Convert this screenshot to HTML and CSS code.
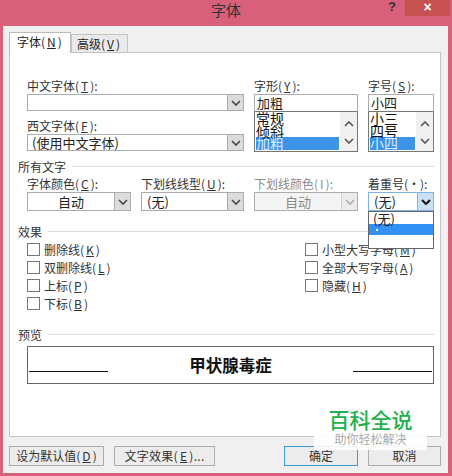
FILE: index.html
```html
<!DOCTYPE html>
<html lang="zh-CN">
<head>
    <meta charset="UTF-8">
    <title>字体</title>
    <link rel="stylesheet" href="styles.css">
</head>
<body>
    <div class="titlebar">
        <span class="title">字体</span>
        <span class="help">?</span>
        <span class="close">×</span>
    </div>

    <div class="dialog">
        <div class="tabs">
            <span class="tab active">字体(<u>N</u>)</span>
            <span class="tab">高级(<u>V</u>)</span>
        </div>

        <div class="panel">
            <!-- Font, style and size -->
            <div class="font-grid">
                <div class="col">
                    <label class="lbl">中文字体(<u>T</u>):</label>
                    <div class="combo short"><span class="val"></span><span class="arrow"><svg width="10" height="6" viewBox="0 0 10 6"><path d="M1 1l4 4 4-4" fill="none" stroke="#444" stroke-width="1.6"/></svg></span></div>
                    <label class="lbl second">西文字体(<u>F</u>):</label>
                    <div class="combo short"><span class="val">(使用中文字体)</span><span class="arrow"><svg width="10" height="6" viewBox="0 0 10 6"><path d="M1 1l4 4 4-4" fill="none" stroke="#444" stroke-width="1.6"/></svg></span></div>
                </div>
                <div class="col">
                    <label class="lbl">字形(<u>Y</u>):</label>
                    <div class="textbox">加粗</div>
                    <div class="listbox">
                        <div class="items">
                            <div class="item">常规</div>
                            <div class="item">倾斜</div>
                            <div class="item selected">加粗</div>
                        </div>
                        <div class="scroll">
                            <svg width="10" height="6" viewBox="0 0 10 6"><path d="M1 5l4-4 4 4" fill="none" stroke="#555" stroke-width="1.6"/></svg>
                            <svg width="10" height="6" viewBox="0 0 10 6"><path d="M1 1l4 4 4-4" fill="none" stroke="#555" stroke-width="1.6"/></svg>
                        </div>
                    </div>
                </div>
                <div class="col">
                    <label class="lbl">字号(<u>S</u>):</label>
                    <div class="textbox">小四</div>
                    <div class="listbox">
                        <div class="items">
                            <div class="item">小三</div>
                            <div class="item">四号</div>
                            <div class="item selected">小四</div>
                        </div>
                        <div class="scroll">
                            <svg width="10" height="6" viewBox="0 0 10 6"><path d="M1 5l4-4 4 4" fill="none" stroke="#555" stroke-width="1.6"/></svg>
                            <svg width="10" height="6" viewBox="0 0 10 6"><path d="M1 1l4 4 4-4" fill="none" stroke="#555" stroke-width="1.6"/></svg>
                        </div>
                    </div>
                </div>
            </div>

            <!-- All text -->
            <div class="section-head all-text"><span>所有文字</span><i></i></div>
            <div class="text-grid">
                <div>
                    <label class="lbl">字体颜色(<u>C</u>):</label>
                    <div class="combo tall center"><span class="val">自动</span><span class="arrow"><svg width="10" height="6" viewBox="0 0 10 6"><path d="M1 1l4 4 4-4" fill="none" stroke="#444" stroke-width="1.6"/></svg></span></div>
                </div>
                <div>
                    <label class="lbl">下划线线型(<u>U</u>):</label>
                    <div class="combo tall"><span class="val">(无)</span><span class="arrow"><svg width="10" height="6" viewBox="0 0 10 6"><path d="M1 1l4 4 4-4" fill="none" stroke="#444" stroke-width="1.6"/></svg></span></div>
                </div>
                <div class="disabled">
                    <label class="lbl">下划线颜色(<span class="plain">I</span>):</label>
                    <div class="combo tall center"><span class="val">自动</span><span class="arrow"><svg width="10" height="6" viewBox="0 0 10 6"><path d="M1 1l4 4 4-4" fill="none" stroke="#aaa" stroke-width="1.6"/></svg></span></div>
                </div>
                <div class="emphasis">
                    <label class="lbl">着重号(・):</label>
                    <div class="combo tall open"><span class="val">(无)</span><span class="arrow"><svg width="10" height="6" viewBox="0 0 10 6"><path d="M1 1l4 4 4-4" fill="none" stroke="#111" stroke-width="2"/></svg></span></div>
                    <div class="dropdown">
                        <div class="drop-item">(无)</div>
                        <div class="drop-item selected"><b class="dot"></b></div>
                    </div>
                </div>
            </div>

            <!-- Effects -->
            <div class="section-head effects"><span>效果</span><i></i></div>
            <div class="checks">
                <label class="check"><b></b>删除线(<u>K</u>)</label>
                <label class="check"><b></b>小型大写字母(<u>M</u>)</label>
                <label class="check"><b></b>双删除线(<u>L</u>)</label>
                <label class="check"><b></b>全部大写字母(<u>A</u>)</label>
                <label class="check"><b></b>上标(<u>P</u>)</label>
                <label class="check"><b></b>隐藏(<u>H</u>)</label>
                <label class="check"><b></b>下标(<u>B</u>)</label>
            </div>

            <!-- Preview -->
            <div class="section-head preview-head"><span>预览</span><i></i></div>
            <div class="preview">
                <i></i>
                <span>甲状腺毒症</span>
                <i></i>
            </div>
        </div>

        <div class="buttons">
            <button class="btn default-btn">设为默认值(<u>D</u>)</button>
            <button class="btn effect-btn">文字效果(<u>E</u>)...</button>
            <button class="btn ok-btn">确定</button>
            <button class="btn cancel-btn">取消</button>
        </div>
    </div>

    <!-- Watermark -->
    <div class="watermark">
        <div class="wm-name">百科全说</div>
        <div class="wm-sub">助你轻松解决</div>
    </div>
</body>
</html>
```

FILE: styles.css
```css
* {
    box-sizing: border-box;
}
html, body {
    height: 100%;
}
body {
    margin: 0;
    position: relative;
    overflow: hidden;
    background-color: #d9607a;
    font-family: "Noto Sans CJK SC", "Liberation Sans", sans-serif;
    font-size: 12px;
    color: #222;
}
u {
    text-decoration: underline;
    margin: 0 2px;
}
.plain {
    margin: 0 2px;
}

/* Title bar */
.titlebar {
    height: 26px;
    position: relative;
}
.title {
    position: absolute;
    left: 211px;
    top: 0;
    font-size: 15px;
    line-height: 20px;
    color: #333;
}
.help {
    position: absolute;
    left: 388px;
    top: -1px;
    font-family: "Liberation Sans", sans-serif;
    font-weight: bold;
    font-size: 13px;
    line-height: 16px;
    color: #333;
}
.close {
    position: absolute;
    left: 405px;
    top: 0;
    width: 45px;
    height: 16px;
    background-color: #c75050;
    color: #fff;
    text-align: center;
    font-family: "Liberation Sans", sans-serif;
    font-weight: bold;
    font-size: 14px;
    line-height: 15px;
}

/* Dialog */
.dialog {
    margin: 0 4px 0 3px;
    height: 447px;
    background-color: #f0f0f0;
    padding: 0 7px 0 6px;
}
.tabs {
    height: 26px;
    padding-top: 6px;
    display: flex;
    align-items: flex-end;
}
.tab {
    height: 18px;
    width: 57px;
    padding-left: 5px;
    border: 1px solid #c4c4c4;
    border-bottom: none;
    background-color: #eaeaea;
    font-size: 12px;
    line-height: 17px;
    white-space: nowrap;
}
.tab.active {
    height: 21px;
    width: 62px;
    padding-left: 7px;
    background-color: #fff;
    border-color: #bbb;
    position: relative;
    margin-bottom: -1px;
    z-index: 1;
}
.panel {
    height: 385px;
    background-color: #fff;
    border: 1px solid #c4c4c4;
    padding: 26px 6px 0 17px;
}

/* Labels and controls */
.lbl {
    display: block;
    height: 15px;
    font-size: 12px;
    line-height: 13px;
    white-space: nowrap;
    color: #333;
}
.lbl.second {
    margin-top: 8px;
}
.font-grid {
    display: grid;
    grid-template-columns: 217px 104px 66px;
    column-gap: 10px;
}
.combo {
    display: flex;
    border: 1px solid #acacac;
    background-color: #fff;
}
.combo.short {
    height: 17px;
}
.combo.tall {
    height: 19px;
}
.val {
    flex: 1;
    padding-left: 4px;
    font-size: 13px;
    line-height: 15px;
    white-space: nowrap;
}
.combo.tall .val {
    line-height: 17px;
    padding-left: 5px;
}
.combo.center .val {
    text-align: center;
    padding-left: 0;
}
.arrow {
    width: 16px;
    background-color: #dcdcdc;
    border-left: 1px solid #acacac;
    display: flex;
    align-items: center;
    justify-content: center;
}
.textbox {
    height: 18px;
    border: 1px solid #acacac;
    border-bottom-color: #777;
    padding-left: 2px;
    font-size: 13px;
    line-height: 16px;
}
.listbox {
    height: 40px;
    display: flex;
    border: 1px solid #777;
    border-top: none;
    overflow: hidden;
}
.items {
    flex: 1;
    padding: 0 1px;
    overflow: hidden;
}
.item {
    height: 12.5px;
    font-size: 14px;
    line-height: 13px;
    color: #111;
}
.item.selected {
    background-color: #3d93e8;
    color: #d8ecff;
}
.scroll {
    width: 17px;
    background-color: #f0f0f0;
    display: flex;
    flex-direction: column;
    align-items: center;
    justify-content: space-around;
    padding: 4px 0 2px;
}

/* Section headings with a rule */
.section-head {
    display: flex;
    align-items: center;
    height: 14px;
    margin-left: -9px;
    font-size: 12px;
    color: #333;
}
.section-head i {
    flex: 1;
    height: 1px;
    margin-left: 6px;
    background-color: #dcdcdc;
}
.all-text {
    margin-top: 7px;
}
.effects {
    margin-top: 13px;
}
.preview-head {
    margin-top: 15px;
}

/* All text row */
.text-grid {
    margin-top: 4px;
    display: grid;
    grid-template-columns: 104px 103px 104px 66px;
    column-gap: 10px;
}
.disabled .lbl,
.disabled .val {
    color: #8a8a8a;
}
.disabled .combo {
    background-color: #f4f4f4;
}
.disabled .arrow {
    background-color: #ececec;
    border-left-color: #d0d0d0;
}
.emphasis {
    position: relative;
}
.combo.open {
    border-color: #7eb4ea;
}
.combo.open .arrow {
    background-color: #c9e0f7;
    border-left-color: #7eb4ea;
}
.dropdown {
    position: absolute;
    left: 0;
    right: 0;
    top: 34px;
    height: 38px;
    background-color: #fff;
    border: 1px solid #666;
    z-index: 2;
}
.drop-item {
    height: 12px;
    padding-left: 4px;
    font-size: 13px;
    line-height: 13px;
}
.drop-item.selected {
    height: 11px;
    background-color: #3390f5;
    display: flex;
    align-items: center;
    padding-left: 7px;
}
.dot {
    width: 2px;
    height: 2px;
    background-color: #fff;
}

/* Effects checkboxes */
.checks {
    margin-top: 2px;
    display: grid;
    grid-template-columns: 278px 1fr;
    grid-auto-rows: 18px;
}
.check {
    display: flex;
    align-items: center;
    font-size: 12px;
    color: #333;
    white-space: nowrap;
}
.check b {
    width: 13px;
    height: 13px;
    margin-right: 4px;
    border: 1px solid #777;
    background-color: #fff;
}

/* Preview */
.preview {
    margin-top: 5px;
    height: 38px;
    border: 1px solid #666;
    display: flex;
    align-items: center;
    justify-content: space-between;
    padding: 0 1px;
}
.preview span {
    font-family: "Noto Sans CJK SC", sans-serif;
    font-weight: bold;
    font-size: 16.5px;
    color: #111;
}
.preview i {
    width: 79px;
    height: 1px;
    margin-top: 12px;
    background-color: #111;
}

/* Bottom buttons */
.buttons {
    margin-top: 9px;
    display: flex;
}
.btn {
    height: 20px;
    padding: 0;
    border: 1px solid #acacac;
    background-color: #ececec;
    font-family: inherit;
    font-size: 12px;
    line-height: 16px;
    color: #333;
    white-space: nowrap;
}
.default-btn {
    width: 95px;
}
.effect-btn {
    width: 101px;
    margin-left: 10px;
    letter-spacing: 0.3px;
}
.ok-btn {
    width: 74px;
    margin-left: 69px;
    border-color: #3c9ad6;
}
.cancel-btn {
    width: 73px;
    margin-left: 10px;
}

/* Watermark */
.watermark {
    position: absolute;
    left: 314px;
    top: 400px;
    width: 113px;
    height: 50px;
    background-color: rgba(255, 255, 255, 0.9);
    text-align: center;
    z-index: 3;
}
.wm-name {
    font-size: 21px;
    line-height: 26px;
    margin-top: 6px;
    font-weight: 500;
    color: #22b14c;
}
.wm-sub {
    font-size: 12px;
    line-height: 14px;
    color: #aaa;
}
```
